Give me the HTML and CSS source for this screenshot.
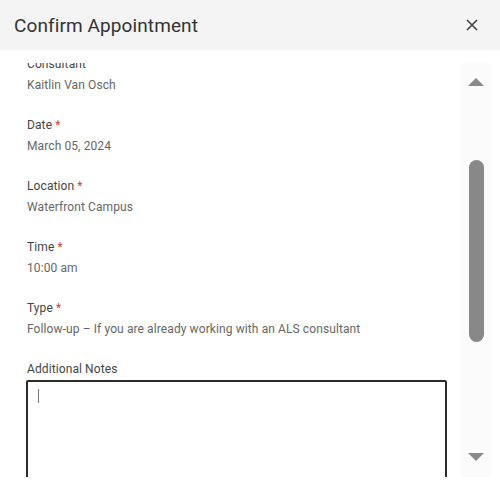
FILE: index.html
```html
<!DOCTYPE html>
<html lang="en">
<head>
    <meta charset="UTF-8">
    <meta name="viewport" content="width=device-width, initial-scale=1.0">
    <title>Confirm Appointment</title>
    <link rel="stylesheet" href="styles.css">
</head>
<body>
    <div class="modal">
        <div class="modal-header">
            <h2>Confirm Appointment</h2>
            <button class="close" aria-label="Close">
                <svg width="12" height="12" viewBox="0 0 12 12"><path d="M1 1L11 11M11 1L1 11" stroke="#444" stroke-width="1.6"/></svg>
            </button>
        </div>
        <div class="modal-body">
            <div class="viewport">
                <div class="fields">
                    <div class="field">
                        <div class="label">Consultant</div>
                        <div class="value">Kaitlin Van Osch</div>
                    </div>
                    <div class="field">
                        <div class="label">Date <span class="req">*</span></div>
                        <div class="value">March 05, 2024</div>
                    </div>
                    <div class="field">
                        <div class="label">Location <span class="req">*</span></div>
                        <div class="value">Waterfront Campus</div>
                    </div>
                    <div class="field">
                        <div class="label">Time <span class="req">*</span></div>
                        <div class="value">10:00 am</div>
                    </div>
                    <div class="field">
                        <div class="label">Type <span class="req">*</span></div>
                        <div class="value">Follow-up – If you are already working with an ALS consultant</div>
                    </div>
                    <div class="field">
                        <div class="label">Additional Notes</div>
                        <div class="notes"><span class="caret"></span></div>
                    </div>
                </div>
            </div>
            <div class="scrollbar">
                <span class="arrow up"></span>
                <div class="track">
                    <div class="thumb"></div>
                </div>
                <span class="arrow down"></span>
            </div>
        </div>
    </div>
</body>
</html>
```

FILE: styles.css
```css
body {
    margin: 0;
    font-family: Roboto, "Liberation Sans", Arial, sans-serif;
    background: #fff;
}
.modal {
    width: 500px;
    height: 497px;
    display: flex;
    flex-direction: column;
}
.modal-header {
    height: 50px;
    background: #f4f4f4;
    display: flex;
    align-items: center;
    justify-content: space-between;
    padding: 0 20px 0 14px;
    box-sizing: border-box;
    flex-shrink: 0;
}
.modal-header h2 {
    margin: 0;
    font-size: 19px;
    font-weight: 400;
    letter-spacing: 0.1px;
    color: #333;
}
.close {
    border: none;
    background: none;
    padding: 0;
    width: 16px;
    height: 16px;
    display: flex;
    align-items: center;
    justify-content: center;
    cursor: pointer;
}
.modal-body {
    display: flex;
    margin-top: 13px;
    height: 414px;
}
.viewport {
    flex: 1;
    overflow: hidden;
}
.fields {
    margin-top: -9px;
    padding-left: 27px;
    padding-right: 14px;
}
.field {
    margin-bottom: 20px;
}
.label {
    font-size: 12px;
    line-height: 20px;
    letter-spacing: 0.1px;
    color: #444;
    margin-bottom: 1px;
}
.req {
    color: #d0453a;
}
.value {
    font-size: 12px;
    line-height: 20px;
    letter-spacing: 0.1px;
    color: #666;
}
.notes {
    margin-left: -1px;
    width: 421px;
    height: 120px;
    border: 2px solid #2b2b2b;
    border-radius: 2px;
    padding: 7px 10px;
    box-sizing: border-box;
}
.caret {
    display: block;
    width: 1px;
    height: 14px;
    background: #777;
}
.scrollbar {
    width: 30px;
    margin-right: 9px;
    background: #fbfbfb;
    display: flex;
    flex-direction: column;
    align-items: center;
}
.arrow {
    width: 0;
    height: 0;
    border-left: 8px solid transparent;
    border-right: 8px solid transparent;
}
.arrow.up {
    margin-top: 15px;
    border-bottom: 8px solid #8a8a8a;
}
.arrow.down {
    margin-bottom: 16px;
    border-top: 8px solid #8a8a8a;
}
.track {
    flex: 1;
    width: 100%;
    display: flex;
    justify-content: center;
}
.thumb {
    margin-top: 74px;
    width: 15px;
    height: 182px;
    border-radius: 8px;
    background: #888;
}
```
